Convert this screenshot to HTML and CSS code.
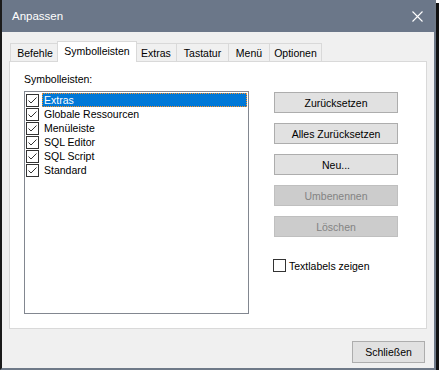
FILE: index.html
```html
<!DOCTYPE html>
<html>

<head>
    <meta charset="utf-8">
    <title>Anpassen</title>
    <link rel="stylesheet" href="styles.css">
</head>

<body>
    <div class="window">
        <div class="titlebar">
            <span class="title">Anpassen</span>
            <svg class="close" width="11" height="11" viewBox="0 0 11 11">
                <path d="M0.5 0.5 L10.5 10.5 M10.5 0.5 L0.5 10.5" stroke="#ffffff" stroke-width="1.1" fill="none" />
            </svg>
        </div>
        <div class="client">
            <div class="tabs">
                <div class="tab tab-befehle">Befehle</div>
                <div class="tab tab-symbol active">Symbolleisten</div>
                <div class="tab tab-extras">Extras</div>
                <div class="tab tab-tastatur">Tastatur</div>
                <div class="tab tab-menu">Menü</div>
                <div class="tab tab-optionen">Optionen</div>
            </div>
            <div class="panel">
                <div class="list-col">
                    <div class="label">Symbolleisten:</div>
                    <div class="listbox">
                        <div class="item"><span class="check"><svg width="11" height="11" viewBox="0 0 11 11"><path d="M1.5 5.5 L4 8 L9.5 2.5" stroke="#333" stroke-width="1" fill="none" /></svg></span><span class="text selected">Extras</span></div>
                        <div class="item"><span class="check"><svg width="11" height="11" viewBox="0 0 11 11"><path d="M1.5 5.5 L4 8 L9.5 2.5" stroke="#333" stroke-width="1" fill="none" /></svg></span><span class="text">Globale Ressourcen</span></div>
                        <div class="item"><span class="check"><svg width="11" height="11" viewBox="0 0 11 11"><path d="M1.5 5.5 L4 8 L9.5 2.5" stroke="#333" stroke-width="1" fill="none" /></svg></span><span class="text">Menüleiste</span></div>
                        <div class="item"><span class="check"><svg width="11" height="11" viewBox="0 0 11 11"><path d="M1.5 5.5 L4 8 L9.5 2.5" stroke="#333" stroke-width="1" fill="none" /></svg></span><span class="text">SQL Editor</span></div>
                        <div class="item"><span class="check"><svg width="11" height="11" viewBox="0 0 11 11"><path d="M1.5 5.5 L4 8 L9.5 2.5" stroke="#333" stroke-width="1" fill="none" /></svg></span><span class="text">SQL Script</span></div>
                        <div class="item"><span class="check"><svg width="11" height="11" viewBox="0 0 11 11"><path d="M1.5 5.5 L4 8 L9.5 2.5" stroke="#333" stroke-width="1" fill="none" /></svg></span><span class="text">Standard</span></div>
                    </div>
                </div>
                <div class="actions">
                    <button class="btn">Zurücksetzen</button>
                    <button class="btn">Alles Zurücksetzen</button>
                    <button class="btn">Neu...</button>
                    <button class="btn" disabled>Umbenennen</button>
                    <button class="btn" disabled>Löschen</button>
                    <label class="option"><span class="box"></span>Textlabels zeigen</label>
                </div>
            </div>
            <div class="footer">
                <button class="btn btn-close">Schließen</button>
            </div>
        </div>
    </div>
</body>

</html>
```

FILE: styles.css
```css
* {
    box-sizing: border-box;
}

body {
    margin: 0;
    background: #ffffff;
    font-family: "Liberation Sans", Arial, sans-serif;
    font-size: 10.5px;
    color: #000000;
}

.window {
    width: 436px;
    height: 370px;
    display: flex;
    flex-direction: column;
    background: #f0f0f0;
    border-left: 2px solid #1a1a1a;
    border-right: 2px solid #6e7988;
    border-bottom: 2px solid #6e7988;
    box-shadow: 3px 3px 0 #111111;
}

.titlebar {
    height: 32px;
    flex: 0 0 auto;
    display: flex;
    align-items: center;
    justify-content: space-between;
    padding: 0 11px 0 10px;
    background: #6b7789;
    color: #ffffff;
    font-size: 11.5px;
}

.close {
    display: block;
}

.client {
    flex: 1;
    display: flex;
    flex-direction: column;
    padding: 9px 7px 0 7px;
}

/* tab strip */
.tabs {
    display: flex;
    height: 20px;
    padding-left: 1px;
}

.tab {
    height: 18px;
    margin-top: 2px;
    display: flex;
    align-items: center;
    justify-content: center;
    background: #f0f0f0;
    border: 1px solid #d9d9d9;
    border-bottom: none;
    border-right: none;
}

.tab:last-child {
    border-right: 1px solid #d9d9d9;
}

.tab.active {
    position: relative;
    z-index: 1;
    height: 21px;
    margin: 0 -2px;
    padding-bottom: 2px;
    background: #ffffff;
    border-right: 1px solid #d9d9d9;
}

.tab-befehle { width: 49px; }
.tab-symbol { width: 80px; }
.tab-extras { width: 41px; }
.tab-tastatur { width: 52px; }
.tab-menu { width: 41px; }
.tab-optionen { width: 53px; }

/* page */
.panel {
    height: 268px;
    display: flex;
    gap: 25px;
    padding: 10px 14px 0 14px;
    background: #ffffff;
    border: 1px solid #d9d9d9;
}

.label {
    height: 15px;
    line-height: 15px;
    margin-bottom: 4px;
}

.listbox {
    width: 225px;
    height: 223px;
    padding: 1px;
    border: 1px solid #828790;
    background: #ffffff;
}

.item {
    display: flex;
    align-items: center;
    height: 14px;
}

.check {
    width: 13px;
    height: 13px;
    margin-right: 3px;
    border: 1px solid #333333;
    background: #ffffff;
}

.check svg {
    display: block;
}

.text {
    flex: 1;
    height: 14px;
    line-height: 12px;
    padding-left: 1px;
    border: 1px solid transparent;
}

.text.selected {
    background: #0078d7;
    color: #ffffff;
    border: 1px dotted #ff9326;
}

.actions {
    width: 124px;
    margin-top: 20px;
    display: flex;
    flex-direction: column;
    gap: 10px;
}

.btn {
    height: 21px;
    padding: 0;
    font: inherit;
    color: #000000;
    background: #e1e1e1;
    border: 1px solid #adadad;
    border-radius: 0;
}

.btn:disabled {
    color: #838383;
    background: #cccccc;
    border-color: #bfbfbf;
}

.option {
    display: flex;
    align-items: center;
    margin: 12px 0 0 -1px;
    height: 13px;
}

.option .box {
    width: 13px;
    height: 13px;
    margin-right: 3px;
    border: 1px solid #333333;
    background: #ffffff;
}

.footer {
    display: flex;
    justify-content: flex-end;
    padding: 12px 2px 0 0;
}

.btn-close {
    width: 73px;
    height: 22px;
}
```
